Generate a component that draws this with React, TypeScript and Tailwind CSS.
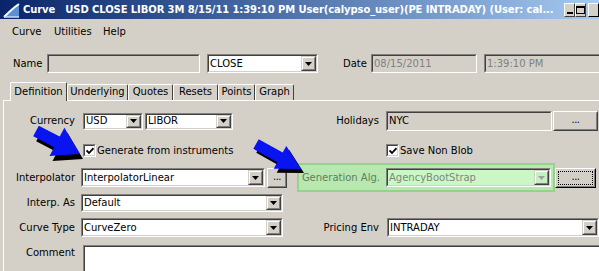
import React from "react";

const sunkenOuter =
  "border border-t-[#808080] border-l-[#808080] border-r-white border-b-white";
const sunkenInner =
  "border border-t-[#404040] border-l-[#404040] border-r-[#d4d0c8] border-b-[#d4d0c8]";

function Sunken({
  className,
  innerClassName,
  children,
}: {
  className: string;
  innerClassName?: string;
  children?: React.ReactNode;
}) {
  return (
    <div className={`${sunkenOuter} shrink-0 ${className}`}>
      <div className={`${sunkenInner} h-full w-full flex items-center overflow-hidden ${innerClassName ?? ""}`}>
        {children}
      </div>
    </div>
  );
}

function DropBtn({ disabled }: { disabled?: boolean }) {
  return (
    <div
      className={`h-full w-[15px] shrink-0 ml-auto border border-t-[#d4d0c8] border-l-[#d4d0c8] border-r-[#404040] border-b-[#404040] ${
        disabled ? "bg-[#c8efc2]" : "bg-[#d4d0c8]"
      }`}
    >
      <div className="h-full w-full border border-t-white border-l-white border-r-[#808080] border-b-[#808080] flex items-center justify-center">
        <svg width="7" height="4" viewBox="0 0 7 4">
          <path d="M0 0h7L3.5 4z" fill={disabled ? "#a0a0a0" : "#000"} />
        </svg>
      </div>
    </div>
  );
}

function Combo({
  className,
  text,
  inner,
  textClass,
  disabled,
}: {
  className: string;
  text: string;
  inner?: string;
  textClass?: string;
  disabled?: boolean;
}) {
  return (
    <Sunken className={className} innerClassName={inner ?? "bg-white"}>
      <span className={`pl-[1px] whitespace-nowrap ${textClass ?? "text-black"}`}>{text}</span>
      <DropBtn disabled={disabled} />
    </Sunken>
  );
}

function Btn({ className, focus }: { className: string; focus?: boolean }) {
  return (
    <div
      className={`shrink-0 bg-[#d4d0c8] border ${
        focus
          ? "border-t-white border-l-white border-r-[#000] border-b-[#000]"
          : "border-t-white border-l-white border-r-[#404040] border-b-[#404040]"
      } ${className}`}
    >
      <div className="h-full w-full border border-t-[#d4d0c8] border-l-[#d4d0c8] border-r-[#808080] border-b-[#808080] flex items-center justify-center p-[1px]">
        <div
          className={`h-full w-full flex items-center justify-center leading-none pb-[2px] tracking-[-0.5px] ${
            focus ? "border border-dotted border-black" : ""
          }`}
        >
          ...
        </div>
      </div>
    </div>
  );
}

function Check({ className }: { className?: string }) {
  return (
    <div className={`w-[13px] h-[13px] shrink-0 bg-white ${sunkenOuter} ${className ?? ""}`}>
      <div className={`${sunkenInner} w-full h-full flex items-center justify-center`}>
        <svg width="8" height="8" viewBox="0 0 8 8">
          <path d="M0.5 3.5 L3 6 L7.5 1.2" stroke="#000" strokeWidth="1.8" fill="none" />
        </svg>
      </div>
    </div>
  );
}

function arrowPoints(
  x0: number,
  y0: number,
  x1: number,
  y1: number,
  hl: number,
  hw: number,
  sw: number
) {
  const dx = x1 - x0;
  const dy = y1 - y0;
  const len = Math.hypot(dx, dy);
  const ux = dx / len;
  const uy = dy / len;
  const nx = -uy;
  const ny = ux;
  const bx = x1 - ux * hl;
  const by = y1 - uy * hl;
  const p = [
    [x0 + nx * sw, y0 + ny * sw],
    [bx + nx * sw, by + ny * sw],
    [bx + nx * hw, by + ny * hw],
    [x1, y1],
    [bx - nx * hw, by - ny * hw],
    [bx - nx * sw, by - ny * sw],
    [x0 - nx * sw, y0 - ny * sw],
  ];
  return p.map((q) => q.map((v) => v.toFixed(1)).join(",")).join(" ");
}

function Arrow({
  x0,
  y0,
  x1,
  y1,
  hl,
  hw,
  sw,
  ox,
  oy,
}: {
  x0: number;
  y0: number;
  x1: number;
  y1: number;
  hl: number;
  hw: number;
  sw: number;
  ox: number;
  oy: number;
}) {
  return (
    <g>
      <polygon points={arrowPoints(x0 + ox, y0 + oy, x1 + ox, y1 + oy, hl, hw, sw)} fill="#000" />
      <polygon points={arrowPoints(x0, y0, x1, y1, hl, hw, sw)} fill="#0a14f0" />
    </g>
  );
}

const labelL = "w-[72px] shrink-0 text-right pr-[1px]";
const labelR = "w-[84px] shrink-0 text-right pr-[2px]";

export default function App() {
  return (
    <div className="relative w-[599px] h-[271px] overflow-hidden bg-[#d4d0c8] text-black text-[10px] leading-[12px] font-['DejaVu_Sans',sans-serif]">
      {/* Title bar */}
      <div className="h-[19px] flex items-center bg-linear-to-r from-[#0a246a] to-[#a6caf0]">
        <svg className="ml-[3px] shrink-0" width="17" height="16" viewBox="0 0 17 16">
          <path d="M1 15 L16 2 L16 15 Z" fill="#5d8fd6" />
          <path d="M1 15 C6 10 10 6 16 2" stroke="#ffffff" strokeWidth="2" fill="none" />
          <path d="M1 15 L16 15" stroke="#c9dcf5" strokeWidth="1.5" />
        </svg>
        <div className="ml-[3px] flex-1 overflow-hidden whitespace-nowrap text-white font-bold text-[10px] leading-[15px] tracking-[-0.1px]">
          Curve&nbsp;&nbsp;&nbsp;USD CLOSE LIBOR 3M 8/15/11 1:39:10 PM User(calypso_user)(PE INTRADAY) (User: cal...
        </div>
        <div className="flex shrink-0 w-[35px] ml-[6px]">
          <div className="w-[16px] h-[14px] bg-[#d4d0c8] border border-t-white border-l-white border-r-[#404040] border-b-[#404040] flex items-end justify-center pb-[2px]">
            <div className="w-[6px] h-[2px] bg-black" />
          </div>
          <div className="w-[16px] h-[14px] bg-[#d4d0c8] border border-t-white border-l-white border-r-[#404040] border-b-[#404040] flex items-center justify-center">
            <div className="w-[9px] h-[8px] border border-black border-t-2" />
          </div>
          <div className="w-[16px] h-[14px] ml-[2px] bg-[#d4d0c8] border border-t-white border-l-white" />
        </div>
      </div>

      {/* Menu bar */}
      <div className="h-[25px] flex items-center pl-[12px]">
        <span className="w-[42px]">Curve</span>
        <span className="w-[49px]">Utilities</span>
        <span>Help</span>
      </div>

      {/* Name row */}
      <div className="mt-[10px] h-[19px] flex items-center">
        <span className="w-[47px] shrink-0 pl-[13px]">Name</span>
        <Sunken className="w-[153px] h-[19px]" innerClassName="bg-[#d4d0c8]" />
        <Combo className="ml-[7px] w-[111px] h-[19px]" text="CLOSE" />
        <span className="ml-[25px] w-[28px] shrink-0">Date</span>
        <Sunken className="w-[106px] h-[19px]" innerClassName="bg-[#d4d0c8]">
          <span className="pl-[1px] text-[#808080]">08/15/2011</span>
        </Sunken>
        <Sunken className="ml-[7px] w-[120px] h-[19px]" innerClassName="bg-[#d4d0c8]">
          <span className="pl-[1px] text-[#808080] whitespace-nowrap">1:39:10 PM</span>
        </Sunken>
      </div>

      {/* Tabs */}
      <div className="mt-[10px] h-[18px] flex items-end pl-[10px] relative z-10 -mb-px">
        <div className="w-[57px] h-[19px] bg-[#d4d0c8] border-l border-t border-white border-r border-r-[#404040] rounded-t-[2px] flex items-start justify-center pt-[3px]">
          Definition
        </div>
        {[
          ["Underlying", "w-[61px]"],
          ["Quotes", "w-[45px]"],
          ["Resets", "w-[45px]"],
          ["Points", "w-[37px]"],
          ["Graph", "w-[39px]"],
        ].map(([t, w]) => (
          <div
            key={t}
            className={`${w} h-[16px] mb-px bg-[#d4d0c8] border-l border-t border-white border-r border-r-[#404040] rounded-t-[2px] flex items-start justify-center pt-[1px]`}
          >
            {t}
          </div>
        ))}
      </div>

      {/* Panel */}
      <div className="ml-[3px] h-[200px] border-l border-t border-white">
        {/* Currency row */}
        <div className="mt-[10px] h-[20px] flex items-center">
          <span className={labelL}>Currency</span>
          <Combo className="ml-[7px] w-[60px] h-[17px]" text="USD" />
          <Combo className="ml-[2px] w-[88px] h-[17px]" text="LIBOR" />
          <span className={`ml-[64px] ${labelR}`}>Holidays</span>
          <Sunken className="ml-[5px] w-[166px] h-[20px]" innerClassName="bg-[#d4d0c8]">
            <span className="pl-[1px]">NYC</span>
          </Sunken>
          <Btn className="ml-[1px] w-[45px] h-[20px]" />
        </div>

        {/* Checkbox row */}
        <div className="mt-[13px] h-[13px] flex items-center">
          <div className="w-[293px] shrink-0 flex items-center pl-[79px]">
            <Check />
            <span className="ml-[1px] whitespace-nowrap">Generate from instruments</span>
          </div>
          <div className="w-[89px] shrink-0" />
          <Check />
          <span className="ml-[1px] whitespace-nowrap">Save Non Blob</span>
        </div>

        {/* Interpolator row */}
        <div className="mt-[6px] h-[29px] flex items-center">
          <span className={labelL}>Interpolator</span>
          <Combo className="ml-[5px] w-[184px] h-[19px]" text="InterpolatorLinear" />
          <Btn className="ml-[2px] w-[20px] h-[20px]" />
          <div className="ml-[10px] w-[258px] h-[29px] shrink-0 bg-[#b8e7b0] border-2 border-[#93d38b] flex items-center">
            <span className="w-[82px] shrink-0 text-right pr-[1px] text-[#5f7f5f] whitespace-nowrap">Generation Alg.</span>
            <Combo
              className="ml-[5px] w-[165px] h-[19px]"
              text="AgencyBootStrap"
              inner="bg-[#cbf6c6]"
              textClass="text-[#7a8a7a]"
              disabled
            />
          </div>
          <Btn className="w-[41px] h-[20px]" focus />
        </div>

        {/* Interp. As row */}
        <div className="mt-[2px] h-[18px] flex items-center">
          <span className={labelL}>Interp. As</span>
          <Combo className="ml-[5px] w-[202px] h-[18px]" text="Default" />
        </div>

        {/* Curve Type row */}
        <div className="mt-[6px] h-[19px] flex items-center">
          <span className={labelL}>Curve Type</span>
          <Combo className="ml-[5px] w-[202px] h-[19px]" text="CurveZero" />
          <span className={`ml-[14px] ${labelR}`}>Pricing Env</span>
          <Combo className="ml-[6px] w-[212px] h-[19px]" text="INTRADAY" />
        </div>

        {/* Comment row */}
        <div className="mt-[8px] flex items-start">
          <span className={`${labelL} pt-[2px]`}>Comment</span>
          <Sunken className="ml-[7px] w-[520px] h-[40px]" innerClassName="bg-white" />
        </div>
      </div>

      {/* Annotation arrows */}
      <svg className="absolute inset-0 pointer-events-none" width="599" height="271" viewBox="0 0 599 271">
        <Arrow x0={36} y0={131} x1={80} y1={154} hl={26} hw={16} sw={6} ox={3} oy={5} />
        <Arrow x0={256} y0={144} x1={301} y1={169} hl={24} hw={13} sw={5.5} ox={3} oy={4} />
      </svg>
    </div>
  );
}
